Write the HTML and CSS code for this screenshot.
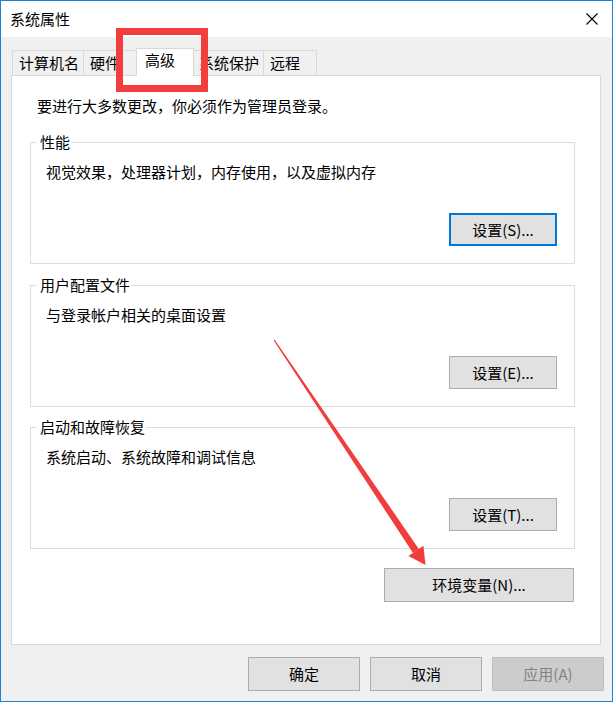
FILE: index.html
```html
<!DOCTYPE html>
<html lang="zh-CN">
<head>
<meta charset="utf-8">
<title>系统属性</title>
<link rel="stylesheet" href="styles.css">
</head>
<body>
<div class="window">
  <div class="titlebar">
    <span class="title">系统属性</span>
    <svg class="close" width="12" height="12" viewBox="0 0 12 12"><path d="M0.5 0.5 L11.5 11.5 M11.5 0.5 L0.5 11.5" stroke="#000" stroke-width="1.1" fill="none"/></svg>
  </div>
  <div class="tabs">
    <div class="tab">计算机名</div>
    <div class="tab">硬件</div>
    <div class="tab active">高级</div>
    <div class="tab tab-tight">系统保护</div>
    <div class="tab">远程</div>
  </div>
  <div class="panel">
    <p class="intro">要进行大多数更改，你必须作为管理员登录。</p>
    <fieldset class="group">
      <legend>性能</legend>
      <p class="desc">视觉效果，处理器计划，内存使用，以及虚拟内存</p>
      <div class="btn-row"><button class="btn btn-set focused">设置(S)...</button></div>
    </fieldset>
    <fieldset class="group group-2">
      <legend>用户配置文件</legend>
      <p class="desc">与登录帐户相关的桌面设置</p>
      <div class="btn-row"><button class="btn btn-set">设置(E)...</button></div>
    </fieldset>
    <fieldset class="group group-3">
      <legend>启动和故障恢复</legend>
      <p class="desc">系统启动、系统故障和调试信息</p>
      <div class="btn-row"><button class="btn btn-set">设置(T)...</button></div>
    </fieldset>
    <button class="btn btn-env">环境变量(N)...</button>
  </div>
  <div class="footer">
    <button class="btn btn-foot">确定</button>
    <button class="btn btn-foot">取消</button>
    <button class="btn btn-foot disabled">应用(A)</button>
  </div>
</div>
<div class="highlight"></div>
<svg class="arrow" width="613" height="702" viewBox="0 0 613 702">
  <polygon fill="#f23d3d" points="273.7,340.4 274.7,339.8 418.8,548.9 413.0,552.9"/>
  <polygon fill="#f23d3d" points="425.5,565 408.4,556.0 423.4,545.8"/>
</svg>
</body>
</html>
```

FILE: styles.css
```css
* { box-sizing: border-box; }
html, body {
  margin: 0;
  padding: 0;
  background: #f0f0f0;
}
body {
  font-family: "Noto Sans CJK SC", "Noto Sans", sans-serif;
  font-size: 15px;
  color: #000;
  width: 613px;
  height: 702px;
  overflow: hidden;
  position: relative;
}
.window {
  width: 613px;
  height: 702px;
  border: 1px solid #1883d7;
  background: #f0f0f0;
  display: flex;
  flex-direction: column;
}
.titlebar {
  height: 36px;
  background: #fff;
  display: flex;
  align-items: center;
  justify-content: space-between;
  padding: 0 14px 0 9px;
  flex: none;
}
.title { line-height: 20px; }
.close { display: block; }

.tabs {
  margin-top: 11px;
  padding-left: 11px;
  display: flex;
  align-items: flex-end;
  height: 27px;
  flex: none;
}
.tab {
  height: 25px;
  min-width: 54px;
  border: 1px solid #d9d9d9;
  border-bottom: none;
  background: #f0f0f0;
  padding: 0 4px 0 6px;
  line-height: 24px;
  margin-left: -1px;
  white-space: nowrap;
}
.tab:first-child { margin-left: 0; }
.tab-tight { padding-left: 5px; }
.tab.active {
  position: relative;
  z-index: 1;
  height: 28px;
  min-width: 58px;
  margin-bottom: -1px;
  background: #fff;
  padding: 0 4px 0 8px;
  line-height: 22px;
}

.panel {
  margin: 0 11px 0 10px;
  height: 570px;
  border: 1px solid #d9d9d9;
  background: #fff;
  padding-top: 20px;
  display: flex;
  flex-direction: column;
  flex: none;
}
.intro {
  margin: 0 0 0 25px;
  line-height: 20px;
}
.group {
  margin: 17px 25px 0 18px;
  padding: 0 17px 17px 15px;
  border: 1px solid #dcdcdc;
  min-width: 0;
}
.group-2 { margin-top: 12px; }
.group-3 { margin-top: 11px; }
.group legend {
  line-height: 18px;
  padding: 0 1px 0 4px;
  margin-left: -10px;
}
.desc {
  margin: 11px 0 0 0;
  line-height: 20px;
}
.btn-row {
  margin-top: 31px;
  display: flex;
  justify-content: flex-end;
}
.btn {
  font-family: "Noto Sans CJK SC", "Noto Sans", sans-serif;
  font-size: 15px;
  color: #000;
  background: #e1e1e1;
  border: 1px solid #adadad;
  padding: 0;
  margin: 0;
  line-height: 20px;
}
.btn-set {
  width: 108px;
  height: 33px;
}
.btn.focused {
  border: 2px solid #0078d7;
}
.btn-env {
  align-self: flex-end;
  margin: 19px 26px 0 0;
  width: 190px;
  height: 34px;
}
.footer {
  margin-top: 12px;
  display: flex;
  justify-content: flex-end;
  gap: 10px;
  padding-right: 8px;
}
.btn-foot {
  width: 112px;
  height: 34px;
}
.btn.disabled {
  background: #cccccc;
  border-color: #bfbfbf;
  color: #838383;
}

.highlight {
  position: absolute;
  left: 116px;
  top: 28px;
  width: 92px;
  height: 64px;
  border: 7px solid #f23d3d;
  pointer-events: none;
}
.arrow {
  position: absolute;
  left: 0;
  top: 0;
  pointer-events: none;
}
```
